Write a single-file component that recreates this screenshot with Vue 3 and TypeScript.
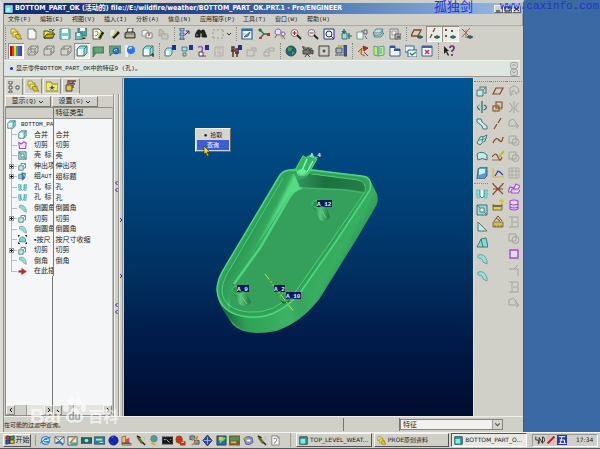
<script setup lang="ts">
import { h, ref, type FunctionalComponent } from 'vue'

type Shape = [d: string, fill: string, stroke?: string, width?: number]
interface Group { width: number; icons: string[] }

const K = '#20241f'
const G = '#a3a39c'
const T = '#79e3e0'
const D = '#40646a'
const N = '#20308c'
const B = '#874620'
const P = '#a24bd0'
const cube: Shape[] = [['M1 4L4 1H11V8L8 11H1Z', T, D], ['M2 4H8V10H2Z', '#f5ffff', 'none'], ['M8 4L11 1M8 4V11', 'none', D]]
const wire: Shape[] = [['M1 4H8V10H1ZM4 1H11V7H4ZM1 4L4 1M8 4L11 1M8 10L11 7M1 10L4 7', 'none', '#777770', 0.8]]
const badge: Shape = ['M8 0H12V5H8Z', N]
const page: Shape[] = [['M2 1H8L10 3V11H2Z', '#f8f8f4', '#777770'], ['M8 1V3H10', 'none', '#777770']]
const lens: Shape[] = [['M1 5A3.5 3.5 0 1 0 8 5A3.5 3.5 0 1 0 1 5', '#ececf2', '#666', 0.8], ['M7 7L11 11', 'none', K, 1.8]]
const eye: Shape = ['M6 9Q9 6 12 9Q9 12 6 9', '#237b64', '#235', 0.5]
const tools: Shape[] = [['M3 2L8 9', 'none', '#69702c', 3], ['M2 1L6 3M8 8L11 11', 'none', K, 1.5], ['M9 2L11 5', 'none', '#bbb', 1.5]]

const icons: Record<string, Shape[]> = {
  cube,
  logo: [['M1 1H11V11H1Z', '#5ad8d0', '#eaffff'], ['M2 4H8V10H2Z', '#a6fff4']],
  taskcube: [['M1 1H11V11H1Z', '#3f9f9c', '#22494c', 1.2], ['M2 4H8V10H2Z', '#7df0e6']],
  folders: [['M1 1H5L6 3H8V6H1Z', '#f6e878', '#867a20', 0.7], ['M3 4H7L8 6H10V9H3Z', '#ffe86a', '#867a20', 0.7], ['M5 7L8 6L12 11H7Z', '#e8c820', '#776a10', 0.7]],
  page,
  open: [['M1 3H5L6 4H10V10H1Z', '#f8e44c', K, 0.8], ['M1 10L4 6H12L9 10Z', '#c5ae16', K, 0.8], ['M6 2Q8 0 10 3L11 1', 'none', K, 0.8]],
  save: [['M1 1H11V11H1Z', '#79cdca', '#4e8c8d'], ['M3 1H9V5H3Z', '#f7ffff'], ['M3 8H9V11H3Z', '#dff2ed']],
  saveas: [['M3 0H12V8H3Z', '#48a8a5', D], ['M5 0H10V3H5Z', '#fff'], ['M0 5H7V12H0Z', '#68c0bd', D], ['M2 5H5V8H2Z', '#fff'], ['M9 9L7 11H11Z', K]],
  erase: [['M1 1H7L9 3V11H1Z', '#faf9ed', '#444'], ['M3 4Q6 2 6 5T3 8', 'none', '#777'], ['M7 10L11 4', 'none', K, 3], ['M6 9L9 4', 'none', '#d5d735', 1.5]],
  brush: [['M2 1H7V9H1Z', '#e5e5df', '#bbb', 0.7], ['M5 10L11 4', 'none', K, 2.6], ['M5 8L9 3', 'none', '#cfcf21', 1.5]],
  print: [['M3 5L4 0H9L8 5Z', '#f4f4ef', K, 0.8], ['M1 5L3 4H10L11 6V10H1Z', '#94918d', K], ['M2 8H10', 'none', '#f1e66b']],
  mail: [['M1 3Q4 1 7 3V8H1Z', '#eee', '#888'], ['M5 5H11V10H5Z', '#fff', '#666', 0.8], ['M8 5V8', 'none', '#c44', 1.5]],
  mailgray: [['M2 2Q5 0 7 4V8H2Z', '#c0bfb8', G], ['M4 6H11V11H5Z', '#c6c5be', G, 0.8]],
  tree: [['M1 0H5V3H1ZM1 5H5V8H1ZM1 10H5V12H1Z', '#85cfd0', N, 0.7], ['M6 7L10 3M7 3H10V6', 'none', '#427', 1]],
  binoc: [['M1 5L3 2H5V9H0ZM7 2H9L12 9H7Z', K, K], ['M4 4H8', 'none', K, 3], ['M2 6V8', 'none', '#aaa']],
  select: [['M1 2H3M5 2H7M9 2H11V4M11 6V8M11 10H9M7 10H5M3 10H1V8M1 6V4', 'none', '#929289', 0.9]],
  repaint: [['M1 1H11V11H1Z', '#edf6fa', '#225fa8', 1.2], ['M1 2H11', 'none', '#3269c5', 2], ['M3 9L9 4L7 8Z', '#6aabc1', '#357'], ['M2 6H5', 'none', '#9bc']],
  axes: [['M2 2L6 6L2 10M6 6H10', 'none', '#326e41', 1.4], ['M1 1H3V3H1Z', '#22a844', '#176633'], ['M9 5H12V8H9Z', '#ca2424'], ['M1 9H4V11H1Z', '#ca3535']],
  orient: [['M4 1A3 3 0 1 0 4.1 1M9 4A2 2 0 1 0 9.1 4M8 7L11 11M3 6L1 10', '#edf', '#69698e', 1], ['M5 6L9 11', 'none', '#aa9b3a', 1]],
  zoomin: [...lens, ['M2.5 5H6.5M4.5 3V7', 'none', '#a01820', 1]],
  zoomout: [...lens, ['M2.5 5H6.5', 'none', '#903040', 1]],
  refit: [['M1 1H11V11H1Z', '#f7f7ff', '#20308c', 1], ['M3 6A3 3 0 1 0 9 6A3 3 0 1 0 3 6M8 8L11 11', '#e8ecff', '#333', 1]],
  reorient: [['M2 5H7V11H2Z', '#8ddedb', D], ['M4 1V4M2 3L4 5L6 3M9 5V11M8 8H12', 'none', '#23626c', 1.2]],
  saved: [['M1 4H7V11H1Z', '#e3fcfa', '#7d8990'], ['M5 3H7M8 2H11V6H8ZM9 8L11 11', 'none', '#5b6272', 1]],
  layers: [['M2 9L5 5H12L9 9Z', '#96d8d4', D, 0.7], ['M1 7L4 3H11L8 7Z', '#c8eeed', D, 0.7], ['M1 5L4 1H11L8 5Z', '#b4e6e2', D, 0.7]],
  viewmgr: [['M1 1H9V11H1Z', '#deded9', '#777'], ['M3 3H7V7H3Z', '#eee', '#888', 0.7], ['M6 6H12V11H6Z', '#aaa', '#555', 0.8], ['M8 9H11', 'none', K, 1]],
  spectrum: [['M0 1H2V11H0Z', '#8d1710'], ['M2 1H4V11H2Z', '#ff3020'], ['M4 1H6V11H4Z', '#ffcf20'], ['M6 1H8V11H6Z', '#40ae42'], ['M8 1H10V11H8Z', '#2d5fd2'], ['M10 1H12V11H10Z', '#6736a5']],
  wire,
  hidden: [...wire, ['M2 5H7V9H2Z', '#d3d1ca']],
  shade: cube,
  green: [['M1 2H12V8H4L1 12Z', '#4a9867', '#387858'], ['M2 4H11M3 6H11M5 2V8M8 2V8', 'none', '#88b88e', 0.6]],
  greenball: [['M0 1H12V8H4L1 11Z', '#60a77c', '#487c68'], ['M4 6A3 3 0 1 0 10 6A3 3 0 1 0 4 6', '#247bd1', '#23569e'], ['M5 6Q6 3 8 5', 'none', '#bdf', 1]],
  ball: [['M0 0H3V12H0Z', '#e7eeee'], ['M2 5A4 4 0 1 0 10 5A4 4 0 1 0 2 5', '#2679e5'], ['M4 4Q5 2 7 3', 'none', '#d5edff', 1.4], ['M5 9L4 12', 'none', '#8cc', 1]],
  cubecut: [...cube, ['M9 10H12M11 8V12', 'none', K, 1]],
  cubebadge: [['M1 5L3 3H8V9L6 11H1Z', '#a4eeea', D, 0.8], badge, ['M2 6H5V10H2Z', '#f7ffff']],
  pages: [['M1 2H6V6H1ZM2 8H5V11H2Z', '#a4dddd', D, 0.8], badge],
  feature: [['M1 2Q7 0 5 6T9 11', 'none', P, 1.4], badge, ['M2 7H6V11H2Z', '#fff', '#333']],
  grayform: [['M2 2H10V11H2ZM4 4H8M4 7H8M5 9H9', 'none', G, 0.8]],
  people: [['M2 2H4V5H2ZM6 4H8V7H6ZM3 5V12M7 7V12M1 6H5M5 8H9', 'none', '#59352c', 1.5], badge],
  grayarrow: [['M1 5H8V11H1ZM5 3H10V7', 'none', G, 0.9]],
  grayflow: [['M1 7H6V11H1ZM6 3H11V6H6ZM2 7Q2 4 6 4', 'none', G, 0.9]],
  globe: [['M1 6A5 5 0 1 0 11 6A5 5 0 1 0 1 6', '#245f84', '#1e4f4d'], ['M3 2L7 3L6 6L3 6ZM7 6L10 8L7 10Z', '#3aa35a']],
  camera: [['M1 1A1 1 0 1 0 6 3M6 2A1 1 0 1 0 10 3M1 5H8V9H1ZM8 6L11 5V9L8 8M5 9L3 12M5 9L8 12', '#777', '#444', 1]],
  stop: [['M1 1H11V11H1Z', '#c6c5bf', '#333'], ['M4 4H8V8H4Z', '#555', '#eee', 1]],
  computer: [['M1 3H7V8H1ZM0 10H8', '#a2b5ba', '#45516a', 1], ['M9 0H12V11H9Z', '#3459a3', '#36445e'], ['M3 1H8', 'none', '#b6a640', 1.5]],
  flag: [['M1 7L5 3L4 9L8 11', '#f0bc27', '#a85612', 1], ['M6 1L11 3L7 6ZM7 7L11 11', '#c02a23', '#902525']],
  book: [['M1 1L5 2V11L1 10ZM5 2L11 1V10L5 11Z', '#d8e65c', '#42a0aa'], ['M6 3H9V9H6Z', '#62d3de']],
  windows: [['M1 1H6V4H11V11H1Z', '#eef8ff', '#24528e'], ['M1 2H6M5 5H11', 'none', '#3151aa', 2]],
  winopen: [['M0 1H9V7H0Z', '#edf6ff', '#24528e'], ['M3 5H12V12H3Z', '#eef8ff', '#24528e'], ['M5 8L7 10L11 7', 'none', '#20944c', 1.4]],
  winclose: [['M1 1H11V11H1Z', '#f4f8ff', '#24528e'], ['M1 2H11', 'none', '#3555a6', 1.8], ['M4 5L8 9M8 5L4 9', 'none', '#d12b30', 1.4]],
  help: [['M1 1L6 6L4 6L6 10L5 11L3 7L1 9Z', K], ['M7 3Q7 1 9 1T11 3Q11 5 9 6V7M9 9V11', 'none', '#6e2478', 1.6]],
  planeeye: [['M3 2H10L7 8H0Z', 'none', B, 1.3], eye],
  lineeye: [['M2 10L4 6M5 4L7 0', 'none', B, 1.3], eye],
  pointseye: [['M1 1L3 3M3 1L1 3M7 2L9 4M9 2L7 4M1 7L3 9M3 7L1 9', 'none', B, 1], eye],
  csyseye: [['M1 1L9 9M9 0L1 9M5 2V10', 'none', '#9a6850', 1], eye],
  extrude: [['M1 5H7V11H1Z', '#bdebe7', D], ['M4 4V2H10V8H8', 'none', '#477c7d', 1.1], ['M7 5L10 2', 'none', '#477c7d', 0.8]],
  revolve: [['M6 0V12M4 4Q-1 6 4 9M8 4Q13 6 8 9', 'none', '#3d6168', 1.2], ['M2 5L5 3V9Z', '#9ae1da']],
  sweep: [['M1 1H5L6 4L11 8V11H7L6 8L1 4Z', '#c4f0ee', D]],
  blend: [['M1 9L4 3Q8 3 11 1L9 7Q6 8 4 11Z', '#b6edeb', D], ['M3 6Q7 6 10 4M7 3L6 8', 'none', D, 0.7]],
  style: [['M1 4Q6 0 11 5V10Q6 7 2 10Z', '#bfecec', D]],
  stylebox: [['M2 2L5 0H11V9L8 12H1Z', '#5e9bca', '#345f80'], ['M3 2H9V6L3 8Z', '#c8f3fb']],
  plane: [['M4 3H11L8 9H1Z', 'none', B, 1.2]],
  sketch: [['M4 1H10V7H4ZM1 5H7V10H1Z', 'none', B, 1.1], ['M6 3L3 11L10 8', 'none', '#b47849', 0.8]],
  axis: [['M2 11L5 6M6 5L9 0', 'none', B, 1.2]],
  curve: [['M1 9Q4 2 7 6T11 3', 'none', B, 1.3]],
  curveedit: [['M0 7Q4 1 6 7T10 7', 'none', B, 1.2], ['M0 10H9', 'none', B, 0.7], ['M7 7L12 1', 'none', '#babd28', 2]],
  graph: [['M1 1V10H12', 'none', '#d2b828', 1], ['M3 9L6 4L8 5L11 8', 'none', '#3036c0', 1.2]],
  csys: [['M1 1L11 11M11 1L1 11M1 6H11', 'none', B, 1.1], ['M0 0H2M10 0H12M0 12H2', 'none', '#334', 1]],
  analysis: [['M1 5V11H10V5', '#dacb67', '#73691c'], ['M1 7H10', 'none', '#444', 1.4], ['M10 0V5M7 2H12', 'none', '#c6cc20', 1.4]],
  reference: [['M2 5L6 0L10 5M4 2L8 5', 'none', B, 1], ['M1 6H11V11H1Z', '#d1c05a', '#796b28'], ['M3 9V11M6 9V11M9 9V11', 'none', '#554', 0.7]],
  hole: [['M0 2H4V10H1V6H0ZM8 2H12V6H11V10H8Z', '#75e1dc', '#55a7a8', 0.6], ['M4 2V8L6 10L8 8V2', '#f4ffff', '#45747b', 0.8]],
  shell: [['M1 1H11V11H1Z', '#99d9d6', D], ['M4 4H8V8H4ZM1 1L4 4M11 11L8 8', '#e5faf5', D, 0.8]],
  rib: [['M2 1V10H11L8 7Z', '#bcecea', '#527178', 1]],
  draft: [['M1 10L5 2L10 1L12 10Z', '#80ddd8', D], ['M5 2L7 10', 'none', D]],
  round: [['M2 2Q9 0 11 8V11L7 9Q7 5 2 5Z', '#92e1dc', '#688e91', 0.8], ['M2 5L5 8', 'none', '#9cd', 1]],
  cut: [['M1 2L4 4L8 1L11 3L10 10H2Z', '#f5e8f9', P, 1.4]],
  group: [['M1 3H6V9H1Z', '#79dcd7', D], ['M5 1L10 2L9 8L6 11Z', '#367fca', '#2d6090'], ['M7 3L10 6', 'none', '#e5cf46', 1.5]],
  scale: [['M2 9V5Q6 0 10 5V9Z', '#71d9d2', '#376f77'], ['M0 0H3L0 3ZM12 0H9L12 3ZM0 12L3 12L0 9ZM12 12H9L12 9Z', K]],
  insert: [['M1 5H5V2L11 6L5 10V7H1Z', '#d92222', '#851a1a', 0.7]],
  gHood: [['M2 10V5Q2 1 7 1Q11 2 11 7L8 9Q8 5 4 6V10Z', 'none', G, 1]],
  gMirror: [['M6 0V12M1 2Q5 4 4 9L1 11M11 2Q7 4 8 9L11 11', 'none', G, 1]],
  gMove: [['M1 8V3L5 1L8 4V7M1 8H10M8 5L11 8L8 10', 'none', G, 1]],
  gMerge: [['M1 2H8V9H1Z', 'none', G, 1], ['M4 8A3.5 3.5 0 1 0 11 8A3.5 3.5 0 1 0 4 8', 'none', G, 1]],
  gGrid: [['M1 1H11V11H1ZM4 1V11M8 1V11M1 4H11M1 8H11', 'none', G, 0.8]],
  pSurf: [['M0 9L2 4L6 5L8 1L12 3L10 6H4L3 9ZM3 10H10L12 7', '#f3e2f8', P, 1.1]],
  pTube: [['M2 2Q6 0 10 2V10Q6 12 2 10ZM2 5Q6 7 10 5M2 8Q6 10 10 8', '#ead2f2', P, 1.1]],
  gOffset: [['M1 1H10V11H1M4 1V11M5 6H9', 'none', G, 1]],
  pSquare: [['M2 2H10V10H2Z', '#e2dce9', P, 1.4]],
  gCorner: [['M1 4H10V11M6 4L10 0', 'none', G, 1]],
  nodes: [['M1 0H4V3H1ZM1 5H4V8H1ZM1 10H4V12H1ZM8 5H11V8H8Z', '#eee', '#444', 0.9]],
  star: [['M0 2H5L6 4H12V11H0Z', '#f6e85c', '#77702c', 0.8], ['M6 5L7 7H9L7 8.500L8 10L6 9L4 10L5 8L3 7H5Z', '#2356a8']],
  toolbox: [['M1 5H7V11H1Z', '#dec84b', K, 0.8], ['M3 5V1H11M8 1V8M4 3L10 4', 'none', '#664036', 1.3]],
  ie: [['M1 6A5 5 0 1 0 11 6A5 5 0 1 0 1 6', '#3388d4'], ['M3 6H9Q9 3 6 3T3 6Q3 9 8 9', 'none', '#e7f9ff', 1.2], ['M0 9Q6 3 12 2', 'none', '#2869bc', 1]],
  outlook: [['M1 2H11V9H1Z', '#f2eecb', '#567'], ['M1 2L6 6L11 2', 'none', '#258', 1], ['M2 9L6 7L10 11', 'none', '#2b75c9', 2]],
  desk: [['M1 2H11V11H1Z', '#e7eed9', '#347'], ['M3 9L9 2', 'none', '#bf8936', 2], ['M4 8H11V11H4Z', '#50a6a4']],
  media: [['M0 3H12V9H0Z', '#2b6662', '#283c3c'], ['M4 6A2 2 0 1 0 8 6A2 2 0 1 0 4 6', '#8ff0df']],
  card: [['M0 2H12V10H0Z', '#367c91', '#255668'], ['M2 4H9V6H2Z', '#a4e8dc'], ['M6 8H10', 'none', '#eee', 1]],
  blue: [['M1 6A5 5 0 1 0 11 6A5 5 0 1 0 1 6', '#1424bc', '#111f6b'], ['M4 3L6 2', 'none', '#7496ff', 1]],
  house: [['M1 2L5 1V9H11V11H1Z', '#f2c442', '#7a5f8c'], ['M5 5L9 3V9H5Z', '#d94937'], ['M1 9H10', 'none', '#4755bb', 2]],
  tools,
  earth: [['M3 4A3.500 3.500 0 1 0 10 4A3.500 3.500 0 1 0 3 4', '#4f9ba4', '#5a8170'], ['M4 8L8 11', 'none', '#cbb54b', 3]],
  console: [['M0 2H12V10H0Z', '#15171b', '#535560'], ['M2 5H4M5 5L8 8M9 5H10', 'none', '#eee', 0.8]],
  red: [['M1 5A3.500 4 0 1 0 8 5A3.500 4 0 1 0 1 5M6 7H11V11H6Z', '#db291f', '#842'], ['M7 8H10', 'none', '#efd033', 1.5]],
  network: [['M1 1H6V5H1ZM6 6H11V10H6Z', '#739ac8', '#355'], ['M3 6L9 2L8 7L3 11', 'none', '#c58b32', 1.6]],
  compass: [['M6 0L11 6L6 12L1 6Z', '#32498f', '#232e66'], ['M2 6H10M6 2V10', 'none', '#9bb1ef', 1]],
  paint: [['M1 1H11V11H1Z', '#286c98', '#243c52'], ['M3 2H8V6H3Z', '#efc33f'], ['M4 8L10 3', 'none', '#66dd66', 2]],
  picture: [['M0 1H12V11H0Z', '#914c28', '#383'], ['M1 2H11V6H1Z', '#3c9c53'], ['M2 8H8', 'none', '#ebb43a', 2]],
  disk: [['M1 4Q5 0 10 3L11 8Q7 12 3 10Z', '#8793c4', '#54558a'], ['M4 6H8', 'none', '#fff', 2], ['M1 3L5 5', 'none', '#c7aa37', 2]],
  doc: [...page, ['M4 4Q8 3 7 6T4 9', 'none', '#875b80', 1]],
  windowsflag: [['M1 2Q3 0 6 2V5H1Z', '#d63c30', K, 0.8], ['M6 2L11 1V5H6Z', '#35a45c', K, 0.8], ['M1 6H6V10L1 11Z', '#2c55c8', K, 0.8], ['M6 6H11V10H6Z', '#eacb33', K, 0.8]],
  netn: [['M1 2V6H4V11M5 10V3L9 10V2M10 2L12 6L10 9', 'none', '#333', 1.2]],
  pen: [['M1 1H11V11H1Z', '#e5b7b4'], ['M2 10L10 2', 'none', '#9e1d2b', 2.2]],
  ime: [['M0 0H12V12H0Z', '#253b9b'], ['M2 2H10M6 2L4 10M3 6H9V10M2 10H11', 'none', '#f5f5ff', 1.2]],
}

const Icon: FunctionalComponent<{ name: string }> = props =>
  h('svg', { class: 'icon', viewBox: '0 0 12 12', 'aria-hidden': 'true' },
    (icons[props.name] ?? []).map(([d, fill, stroke, width]) =>
      h('path', { d, fill, stroke: stroke ?? 'none', 'stroke-width': width ?? 0.9 })))
Icon.props = ['name']

// Latin runs are set in a narrow fixed pitch beside the ideographs.
const Mixed: FunctionalComponent<{ text: string }> = props =>
  h('span', (props.text.match(/[\x20-\x7e]+|[^\x20-\x7e]+/g) ?? []).map(run =>
    /^[\x20-\x7e]/.test(run) ? h('span', { class: 'latin' }, run) : run))
Mixed.props = ['text']

const menus = ['文件(F)', '编辑(E)', '视图(V)', '插入(I)', '分析(A)', '信息(N)', '应用程序(P)', '工具(T)', '窗口(W)', '帮助(H)']

const barOne: Group[] = [
  { width: 163, icons: ['folders', 'page', 'open', 'save', 'saveas', 'erase', 'brush', 'print', 'mail', 'mailgray'] },
  { width: 56, icons: ['tree', 'binoc', 'select'] },
  { width: 164, icons: ['repaint', 'axes', 'orient', 'zoomin', 'zoomout', 'refit', 'reorient', 'saved', 'layers', 'viewmgr'] },
  { width: 66, icons: ['planeeye', 'lineeye', 'pointseye', 'csyseye'] },
]
const barTwo: Group[] = [
  { width: 148, icons: ['spectrum', 'wire', 'hidden', 'hidden', 'shade', 'green', 'greenball', 'ball', 'cubecut'] },
  { width: 115, icons: ['cubebadge', 'pages', 'feature', 'grayform', 'people', 'grayarrow', 'grayflow'] },
  { width: 66, icons: ['globe', 'camera', 'stop', 'computer'] },
  { width: 80, icons: ['flag', 'book', 'windows', 'winopen', 'winclose'] },
  { width: 16, icons: ['help'] },
]
const pressed = new Set(['lineeye', 'pointseye', 'spectrum', 'shade'])

const rows = [
  { icon: 'cube', name: 'BOTTOM_PA', type: '', root: true, plus: false },
  { icon: 'cube', name: '合并', type: '合并' },
  { icon: 'cut', name: '切剪', type: '切剪' },
  { icon: 'shell', name: '壳 标', type: '壳' },
  { icon: 'extrude', name: '伸出项', type: '伸出项', plus: true },
  { icon: 'group', name: '组AUT', type: '组标题', plus: true },
  { icon: 'hole', name: '孔 标', type: '孔' },
  { icon: 'hole', name: '孔 标', type: '孔' },
  { icon: 'round', name: '倒圆角', type: '倒圆角' },
  { icon: 'extrude', name: '切剪', type: '切剪', plus: true },
  { icon: 'round', name: '倒圆角', type: '倒圆角' },
  { icon: 'scale', name: '▪按尺', type: '按尺寸收缩' },
  { icon: 'extrude', name: '切剪', type: '切剪', plus: true },
  { icon: 'round', name: '倒角', type: '倒角' },
  { icon: 'insert', name: '在此插', type: '' },
]

const sideOne = ['extrude', 'revolve', 'sweep', 'blend', 'style', 'stylebox']
const sideOneLower = ['hole', 'shell', 'rib', 'draft', 'round', 'round']
const sideTwo = ['plane', 'sketch', 'axis', 'curve', 'curveedit', 'graph', 'csys', 'analysis', 'reference']
const sideThree = ['gHood', 'gMirror', 'gMove', 'gMerge', 'gMerge', 'gGrid', 'pSurf', 'pTube', 'gOffset', 'gMerge', 'pSquare', 'gCorner', 'gOffset', 'gMove']
const quick = ['ie', 'outlook', 'desk', 'media', 'card', 'blue', 'house', 'tools', 'earth', 'console', 'red', 'network', 'compass', 'paint', 'picture', 'disk', 'tools', 'doc']
const tasks = [
  { icon: 'taskcube', label: 'TOP_LEVEL_WEAT...' },
  { icon: 'folders', label: 'PROE原创资料' },
  { icon: 'taskcube', label: 'BOTTOM_PART_O...' },
]
const activeTask = ref(2)

const labels = [
  { text: 'A_4', x: 310, y: 151, w: 12, plain: true },
  { text: 'A_12', x: 317, y: 200, w: 15 },
  { text: 'A_9', x: 237, y: 285, w: 12 },
  { text: 'A_2', x: 274, y: 285, w: 11 },
  { text: 'A_10', x: 286, y: 292, w: 15 },
]
</script>

<template>
  <div class="screen">
    <div class="desktop">
      <main class="window">
        <header class="title">
          <Icon name="logo" />
          <h1>BOTTOM_PART_OK (活动的) file://E:/wildfire/weather/BOTTOM_PART_OK.PRT.1 - Pro/ENGINEER</h1>
          <div class="controls">
            <button aria-label="最小化"><svg viewBox="0 0 7 6"><path d="M1 5H5" stroke="#111" /></svg></button>
            <button aria-label="最大化"><svg viewBox="0 0 7 6"><path d="M1 1H6V5H1Z" fill="none" stroke="#111" /></svg></button>
            <button aria-label="关闭"><svg viewBox="0 0 7 6"><path d="M1 1L6 5M6 1L1 5" stroke="#111" /></svg></button>
          </div>
        </header>
        <nav class="menu">
          <button v-for="m in menus" :key="m" :class="{ long: m.length > 5 }"><Mixed :text="m" /></button>
        </nav>
        <div v-for="(bar, b) in [barOne, barTwo]" :key="b" class="bar">
          <div v-for="(g, i) in bar" :key="i" class="group" :style="{ width: g.width + 'px' }">
            <button v-for="(n, j) in g.icons" :key="j" :class="{ pressed: pressed.has(n) }" :aria-label="n"><Icon :name="n" /></button>
            <button v-if="b === 0 && i === 1" class="more" aria-label="more"><svg viewBox="0 0 6 6"><path d="M1 2L3 4L5 2" fill="none" stroke="#333" /></svg></button>
          </div>
        </div>
        <section class="message">
          <p><Mixed text="显示零件BOTTOM_PART_OK中的特征9 (孔)。" /></p>
          <div class="spin">
            <button aria-label="上"><svg viewBox="0 0 8 7"><path d="M2 4L4 2L6 4" fill="none" stroke="#777" /></svg></button>
            <button aria-label="下"><svg viewBox="0 0 8 7"><path d="M2 2L4 4L6 2" fill="none" stroke="#777" /></svg></button>
          </div>
        </section>

        <div class="work">
          <aside class="model">
            <div class="tabs">
              <button v-for="(n, i) in ['nodes', 'folders', 'star', 'toolbox']" :key="n" :class="{ on: i === 0 }" :aria-label="n"><Icon :name="n" /></button>
            </div>
            <div class="drops">
              <button v-for="t in ['显示(Q)', '设置(G)']" :key="t"><Mixed :text="t" /><svg viewBox="0 0 6 6"><path d="M1 2L3 4L5 2" fill="none" stroke="#333" /></svg></button>
            </div>
            <div class="treebox">
              <table>
                <thead><tr><th></th><th>特征类型</th></tr></thead>
                <tbody>
                  <tr v-for="(r, i) in rows" :key="i">
                    <td>
                      <div class="node" :class="{ root: r.root, last: i === rows.length - 1 }">
                        <span class="branch"><i v-if="r.plus"></i></span>
                        <Icon :name="r.icon" />
                        <Mixed class="name" :text="r.name" />
                      </div>
                    </td>
                    <td>{{ r.type }}</td>
                  </tr>
                </tbody>
              </table>
              <div class="blank"><div></div><div></div></div>
              <div class="scrolls">
                <div v-for="n in 2" :key="n" class="hscroll">
                  <button aria-label="左"><svg viewBox="0 0 8 8"><path d="M5 2L3 4L5 6" fill="none" stroke="#111" /></svg></button>
                  <span></span>
                  <button aria-label="右"><svg viewBox="0 0 8 8"><path d="M3 2L5 4L3 6" fill="none" stroke="#111" /></svg></button>
                </div>
              </div>
            </div>
          </aside>
          <div class="split">
            <svg viewBox="113 78 11 338" preserveAspectRatio="xMidYMin slice">
              <path d="M113.500 94V416M118.500 94V416M122.500 78V416" stroke="#96958e" />
              <path d="M114.500 94V416M119.500 94V416" stroke="#efeee9" />
              <path d="M117.500 181L115.500 183L117.500 185M117.500 188L115.500 190L117.500 192M120 218L122 220L120 222M120 274L122 276L120 278M117.500 303L115.500 305L117.500 307M117.500 310L115.500 312L117.500 314" fill="none" stroke="#2020a0" />
            </svg>
          </div>

          <section class="view">
            <svg class="part" viewBox="124 78 349 338" preserveAspectRatio="xMinYMin meet">
              <defs>
                <linearGradient id="side" gradientUnits="userSpaceOnUse" x1="300" y1="250" x2="345" y2="275">
                  <stop offset="0" stop-color="#34a45c" /><stop offset=".7" stop-color="#38ae60" /><stop offset="1" stop-color="#2b9450" />
                </linearGradient>
                <linearGradient id="base" gradientUnits="userSpaceOnUse" x1="222" y1="320" x2="310" y2="300">
                  <stop offset="0" stop-color="#175c34" /><stop offset=".25" stop-color="#2fa158" /><stop offset=".75" stop-color="#3cb365" /><stop offset="1" stop-color="#2b9650" stop-opacity="0" />
                </linearGradient>
                <linearGradient id="wall" gradientUnits="userSpaceOnUse" x1="246" y1="235" x2="262" y2="243">
                  <stop offset="0" stop-color="#2b9653" /><stop offset=".75" stop-color="#35a75e" /><stop offset="1" stop-color="#54dc82" />
                </linearGradient>
                <linearGradient id="back" x1="0" y1="0" x2="1" y2="0">
                  <stop offset="0" stop-color="#329457" /><stop offset=".4" stop-color="#1d7040" /><stop offset="1" stop-color="#267d48" />
                </linearGradient>
                <linearGradient id="post" x1="0" y1="0" x2="1" y2="0">
                  <stop offset="0" stop-color="#1a6b3b" /><stop offset=".45" stop-color="#54c980" /><stop offset="1" stop-color="#1d7341" />
                </linearGradient>
              </defs>
              <path d="M217 290Q217 282 222 272L280 175Q283 171 289 170L296 168L303 155L306 157L309 155L318 157L312 169L362 176Q368 177 370 180L377 194Q379 200 376 206L356 240L320 298Q301 323 276 331Q246 337 233 325L224 311Q217 300 217 290Z" fill="url(#side)" />
              <path d="M218 296L224 311Q233 326 247 331Q272 337 300 318L320 298L298 292Q280 318 248 317Q224 315 218 296Z" fill="url(#base)" />
              <path d="M217 290Q217 282 222 272L280 175Q283 171 289 170L312 169L362 176Q373 177 370 190L337 240L300 293Q276 320 248 317Q219 314 217 290Z" fill="#36a45e" />
              <path d="M222 291Q222 282 226 275L282 178Q286 174 294 173L300 188L290 194L234 284Q229 295 230 309Q222 303 222 291Z" fill="url(#wall)" />
              <path d="M309 174L360 180Q366 181 366 192L347 189L300 187L298 180Q307 179 309 174Z" fill="url(#back)" />
              <path d="M302 188Q293 190 289 198L260 248L233 286Q229 295 230 310Q246 319 267 311Q287 304 299 290L333 240L364 193L342 190Z" fill="#35a05b" />
              <path d="M302 188Q293 190 289 198L260 248L234 284" fill="none" stroke="#56e787" stroke-width="2.500" opacity=".75" />
              <path d="M301 188L345 190L363 193" fill="none" stroke="#41bd6b" />
              <path d="M217 290Q217 282 222 272L280 175Q283 171 289 170L298 170Q304 178 310 170L362 176Q373 177 370 190L337 240L300 293Q276 320 248 317Q219 314 217 290Z" fill="none" stroke="#49dd7b" stroke-width="1.500" />
              <path d="M220 290Q220 283 225 274L282 178Q286 174 296 172M312 172L359 178Q369 180 367 190L334 240L297 292Q274 317 248 314Q222 311 220 290" fill="none" stroke="#319957" stroke-width="1" />
              <path d="M222 291Q222 284 226 276L283 178M312 174L358 180Q367 182 365 192L332 240L296 291Q273 315 248 312Q223 309 222 291" fill="none" stroke="#4be17c" stroke-width=".8" />
              <path d="M296 168L303 156L306 158L309 156L317 159L311 169Q307 178 298 175Z" fill="#35b461" stroke="#54e583" stroke-width=".8" />
              <path d="M307 159L301 173M313 161L307 172" stroke="#8affad" stroke-width="1.500" />
              <ellipse cx="302" cy="172" rx="5" ry="3" fill="#72f49c" opacity=".8" />
              <path d="M312 206L320 220Q326 223 330 217L325 203Q316 198 312 206Z" fill="url(#post)" />
              <ellipse cx="318" cy="204" rx="6" ry="4" fill="#2e9453" stroke="#46cb72" />
              <path d="M232 291L239 304Q247 309 251 302L244 288Q234 284 232 291Z" fill="url(#post)" />
              <ellipse cx="238" cy="290" rx="6" ry="4" fill="#2e9453" stroke="#46cb72" />
              <path d="M280 299L283 304L289 302L291 296Z" fill="#236f40" />
              <ellipse cx="285" cy="297" rx="5" ry="4" fill="#2e9453" stroke="#46cb72" />
              <path d="M265 274L294 312" stroke="#d8dc32" stroke-width="1" stroke-dasharray="7 2 2 2" />
              <path d="M322 211L326 218M242 297L247 304" stroke="#b7c93b" stroke-width=".8" />
              <g v-for="l in labels" :key="l.text">
                <rect v-if="!l.plain" :x="l.x" :y="l.y" :width="l.w" height="7" fill="#071c56" />
                <text :x="l.x" :y="l.y + 6" class="tag">{{ l.text }}</text>
              </g>
            </svg>
            <ul class="popup">
              <li><button>● <span>拾取</span></button></li>
              <li><button class="chosen"><span>查询</span></button></li>
            </ul>
            <svg class="cursor" viewBox="0 0 8 12"><path d="M1 1L7 7L4 7L6 11L4 11L3 8L1 9Z" fill="#ffd51f" stroke="#4a3a10" stroke-width=".7" /></svg>
          </section>

          <aside class="side">
            <div class="col">
              <button v-for="(n, i) in sideOne" :key="i" :aria-label="n"><Icon :name="n" /></button>
              <hr>
              <button v-for="(n, i) in sideOneLower" :key="'l' + i" :aria-label="n"><Icon :name="n" /></button>
            </div>
            <div v-for="(c, k) in [sideTwo, sideThree]" :key="k" class="col">
              <button v-for="(n, i) in c" :key="i" :aria-label="n"><Icon :name="n" /></button>
            </div>
          </aside>
        </div>

        <footer class="status">
          <p>在可能的过滤中查询。</p>
          <span class="cell"></span>
          <select aria-label="过滤器"><option>特征</option></select>
          <svg class="arrow" viewBox="0 0 8 8"><path d="M2 3L4 5L6 3" fill="none" stroke="#555" /></svg>
        </footer>
      </main>
      <div class="mark author">孤独剑</div>
      <div class="mark site">www.caxinfo.com</div>
    </div>

    <footer class="taskbar">
      <button class="start"><Icon name="windowsflag" />开始</button>
      <div class="quick">
        <button v-for="(n, i) in quick" :key="i" :aria-label="n"><Icon :name="n" /></button>
      </div>
      <div class="tasks">
        <button v-for="(t, i) in tasks" :key="t.label" :class="{ active: activeTask === i }" @click="activeTask = i"><Icon :name="t.icon" /><span>{{ t.label }}</span></button>
      </div>
      <div class="tray"><Icon name="netn" /><Icon name="pen" /><Icon name="ime" /><time>17:34</time></div>
    </footer>

    <div class="baidu">
      <span class="bai">Bai</span>
      <svg viewBox="0 0 24 28"><g fill="#fff"><ellipse cx="3.500" cy="12" rx="3" ry="4" /><ellipse cx="9" cy="5" rx="3" ry="4.500" /><ellipse cx="16" cy="5" rx="3" ry="4.500" /><ellipse cx="21" cy="12" rx="2.500" ry="4" /><path d="M12 11Q15 12 17 16Q22 19 20 24Q17 28 12 26Q7 28 4 24Q2 19 7 16Q9 12 12 11Z" /></g><text x="6" y="24">du</text></svg>
      <span class="baike">百科</span>
    </div>
  </div>
</template>

<style>
body { margin: 0; overflow: hidden; }
.latin { font-family: "Liberation Mono", monospace; font-size: 6px; }
</style>

<style scoped>
* { box-sizing: border-box; }
.screen { position: relative; display: flex; flex-direction: column; height: 100vh; background: #3a69a3; font: 7px/10px "Liberation Sans", "Noto Sans CJK SC", sans-serif; color: #1c1c1c; }
button { display: flex; align-items: center; justify-content: center; padding: 0; margin: 0; border: 0; background: none; font: inherit; color: inherit; white-space: nowrap; min-width: 0; }
p, h1, ul { margin: 0; padding: 0; list-style: none; }
.icon { display: block; width: 12px; height: 12px; flex: none; }
.desktop { position: relative; flex: 1; min-height: 0; display: flex; padding-right: 76px; }
.window { flex: 1; min-width: 0; display: flex; flex-direction: column; background: #d1d0c8; border-left: 3px solid #dddcd6; border-right: 1px solid #55575c; border-top: 3px solid #cfcfca; box-shadow: inset 1px 0 #8d8d87; padding-left: 1px; }
.title { display: flex; align-items: center; height: 11px; background: linear-gradient(90deg, #122a70, #2b4c92 40%, #6d92c6 75%, #9bbbe2); color: #fff; padding-right: 2px; }
.title .icon { width: 8px; height: 8px; margin: 0 2px 0 1px; }
.title h1 { flex: 1; font: bold 7px/11px "DejaVu Sans Condensed", "Noto Sans CJK SC", sans-serif; white-space: nowrap; overflow: hidden; }
.controls { display: flex; }
.controls button { width: 9px; height: 8px; background: #d4d2ca; border: 1px solid #f5f5f0; border-right-color: #666; border-bottom-color: #666; }
.controls svg { width: 7px; height: 6px; }
.menu { display: flex; height: 12px; padding-left: 4px; border-bottom: 1px solid #aaa9a2; border-right: 1px solid #999; font-size: 6px; }
.menu button { width: 32px; justify-content: flex-start; }
.menu button.long { width: 43px; }
.bar { display: flex; gap: 6px; height: 16px; padding-left: 4px; }
.bar + .bar { height: 18px; }
.group { position: relative; display: flex; align-items: center; flex: none; }
.group::before { content: ""; position: absolute; left: -3px; top: 1px; bottom: 1px; border-left: 1px dotted #888780; }
.group button { flex: 1; height: 16px; }
.group .more { flex: none; width: 7px; }
.more svg, .drops svg { width: 6px; height: 6px; }
.pressed { background: #ecece6; box-shadow: inset 1px 1px #8d8c86, inset -1px -1px #fff; }
.message { display: flex; align-items: center; height: 17px; background: #dfe6e2; border-top: 1px solid #f2f2ed; border-bottom: 1px solid #999; margin-right: 3px; font-size: 6px; }
.message p { flex: 1; padding-left: 12px; position: relative; }
.message p::before { content: ""; position: absolute; left: 6px; top: 4px; width: 3px; height: 3px; border-radius: 50%; background: #2424c4; }
.spin { width: 10px; }
.spin button { width: 8px; height: 7px; border: 1px solid #aaa9a2; border-radius: 2px; background: #d5d4cc; }
.spin svg { width: 8px; height: 7px; }
.work { flex: 1; min-height: 0; display: flex; padding-top: 1px; }
.model { width: 109px; flex: none; display: flex; flex-direction: column; padding-left: 1px; }
.tabs { display: flex; height: 17px; gap: 1px; }
.tabs button { width: 18px; height: 16px; border: 1px solid #efeee9; border-right-color: #8c8b84; border-radius: 2px 2px 0 0; }
.tabs .on { background: #d8d7d0; height: 17px; border-bottom: 0; }
.drops { display: flex; height: 12px; gap: 1px; border-top: 1px solid #f4f3ef; }
.drops button { width: 46px; gap: 2px; border: 1px solid #f1f0ec; border-right-color: #77766f; border-bottom-color: #77766f; }
.treebox { flex: 1; min-height: 0; display: flex; flex-direction: column; background: #f5f6f7; border: 1px solid #8e8d86; border-right-color: #bbb; }
table { width: 100%; table-layout: fixed; border-collapse: collapse; }
th, td { padding: 0; font-weight: normal; text-align: left; overflow: hidden; white-space: nowrap; line-height: 10px; }
th { height: 10px; background: #d1d0c8; border-bottom: 1px solid #999; }
th:first-child, td:first-child { width: 47px; border-right: 1px solid #77777a; }
th:last-child, td:last-child { padding-left: 2px; }
tbody tr { height: 10px; }
tbody tr:nth-child(even) { height: 11px; }
.node { display: flex; align-items: center; height: 10px; gap: 1px; }
.node .icon { width: 9px; height: 9px; }
.name { padding-left: 6px; }
.branch { width: 11px; height: 11px; flex: none; background: linear-gradient(#bbb, #bbb) 5px 0/1px 100% no-repeat, linear-gradient(#bbb, #bbb) 5px 5px/6px 1px no-repeat; display: flex; align-items: center; }
.last .branch { background: linear-gradient(#bbb, #bbb) 5px 0/1px 5px no-repeat, linear-gradient(#bbb, #bbb) 5px 5px/6px 1px no-repeat; }
.branch i { width: 5px; height: 5px; margin-left: 3px; border: 1px solid #999; background: linear-gradient(#222, #222) 1px 0/1px 3px no-repeat, linear-gradient(#222, #222) 0 1px/3px 1px no-repeat, #fff; }
.root .branch { display: none; }
.root .icon { margin-left: 1px; }
.root .name { padding-left: 4px; }
.blank, .scrolls { display: grid; grid-template-columns: 47px 1fr; }
.blank { flex: 1; }
.blank div:first-child { border-right: 1px solid #77777a; }
.hscroll { display: flex; height: 10px; background: #e5e4df; }
.hscroll button { width: 9px; background: #d1d0c8; border: 1px solid #f4f4f0; border-right-color: #888; border-bottom-color: #888; }
.hscroll svg { width: 8px; height: 8px; flex: none; }
.hscroll span { width: 12px; background: #d1d0c8; border-right: 1px solid #999; margin-right: auto; }
.split { width: 11px; flex: none; overflow: hidden; }
.split svg { width: 11px; height: 100%; }
.view { position: relative; flex: 1; min-width: 0; background: linear-gradient(#005594, #00447c 30%, #003060 58%, #001a48 78%, #000c2e); overflow: hidden; }
.part { display: block; width: 100%; height: 100%; }
.tag { font: bold 6px "Liberation Mono", monospace; fill: #edf2ff; }
.popup { position: absolute; left: 71px; top: 50px; width: 36px; padding: 1px; background: #d5d4cd; border: 1px solid #f0f0ec; border-right-color: #666; border-bottom-color: #666; }
.popup button { width: 100%; height: 10px; gap: 3px; font-size: 6px; }
.popup .chosen { background: #3a5fd0; color: #fff; }
.cursor { position: absolute; left: 79px; top: 67px; width: 8px; height: 12px; }
.side { flex: none; display: flex; width: 50px; border-left: 1px solid #e7e6e1; padding-top: 3px; }
.col { width: 16px; display: flex; flex-direction: column; gap: 4px; border-top: 1px dotted #888; padding-top: 3px; }
.col button { height: 12px; }
.col button:nth-of-type(3n) { margin-top: 1px; }
.col hr { width: 14px; margin: 0; border: 0; border-top: 1px dotted #888; }
.status { display: flex; align-items: center; height: 16px; padding-right: 20px; border-top: 1px solid #efeeea; }
.status p { flex: 1; font-size: 6px; }
.status .cell { width: 57px; height: 13px; border-left: 1px solid #77766f; border-right: 1px solid #77766f; }
.status select { width: 103px; height: 11px; appearance: none; background: #f2f2ef; border: 1px solid #85847e; border-radius: 0; padding: 0 2px; font: inherit; line-height: 9px; color: inherit; }
.arrow { width: 10px; height: 9px; margin-left: -11px; margin-right: 1px; background: #d5d4cc; border-left: 1px solid #999; pointer-events: none; }
.mark { position: absolute; color: #2630d8; white-space: nowrap; }
.author { right: 127px; top: 0; font: 13px/11px "Noto Sans CJK SC", sans-serif; }
.site { right: 1px; top: 0; font: 11px/13px "Liberation Mono", monospace; }
.taskbar { display: flex; align-items: center; height: 17px; padding: 0 2px 1px 3px; background: #d1d0c8; border-top: 1px solid #f3f3ef; border-bottom: 1px solid #55575c; }
.start { width: 28px; height: 13px; border: 1px solid #f6f6f2; border-right-color: #555; border-bottom-color: #555; }
.start .icon { width: 10px; height: 10px; margin-right: 1px; }
.quick { display: flex; width: 247px; margin-left: 4px; padding-left: 3px; border-left: 1px solid #999; }
.quick button { flex: 1; }
.quick .icon { width: 11px; height: 11px; }
.tasks { flex: 1; display: flex; gap: 2px; margin-left: 8px; padding-left: 5px; border-left: 1px solid #999; min-width: 0; }
.tasks button { flex: 1; height: 14px; justify-content: flex-start; gap: 2px; padding-left: 2px; border: 1px solid #f6f6f2; border-right-color: #555; border-bottom-color: #555; font: 6px/10px "DejaVu Sans", "Noto Sans CJK SC", sans-serif; overflow: hidden; }
.tasks .icon { width: 9px; height: 9px; }
.tasks .active { background: #e9e8e3; border-color: #555 #fff #fff #555; }
.tray { display: flex; align-items: center; gap: 1px; width: 66px; height: 13px; margin-left: 5px; padding-left: 2px; border: 1px solid #999; border-right-color: #fff; border-bottom-color: #fff; }
.tray .icon { width: 10px; height: 10px; }
.tray time { margin-left: 8px; font: 6px/10px "DejaVu Sans", sans-serif; }
.baidu { position: absolute; left: 30px; bottom: 25px; display: flex; align-items: flex-end; opacity: .65; color: #fff; pointer-events: none; }
.bai { font: bold 20px/16px "Liberation Sans", sans-serif; }
.baidu svg { width: 25px; height: 28px; margin: 0 1px; }
.baidu text { font: bold 10px "Liberation Sans", sans-serif; fill: #7b8490; }
.baike { font: bold 15px/17px "Noto Sans CJK SC", sans-serif; }
</style>
